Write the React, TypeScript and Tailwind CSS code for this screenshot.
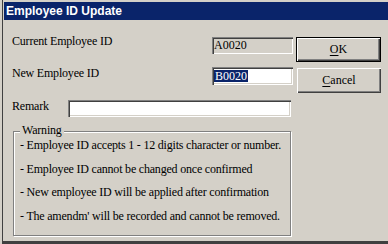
import React from "react";

const sunken =
  "shadow-[inset_1px_1px_0_#808080,inset_2px_2px_0_#404040,inset_-1px_-1px_0_#ffffff,inset_-2px_-2px_0_#d4d0c8]";
const raised =
  "shadow-[inset_1px_1px_0_#ffffff,inset_-1px_-1px_0_#404040,inset_-2px_-2px_0_#808080]";

const warnings = [
  "- Employee ID accepts 1 - 12 digits character or number.",
  "- Employee ID cannot be changed once confirmed",
  "- New employee ID will be applied after confirmation",
  "- The amendm' will be recorded and cannot be removed.",
];

const App: React.FC = () => {
  return (
    <div className="flex h-[244px] w-[388px] bg-[#d4d0c8] font-[family-name:Liberation_Serif,serif] text-[12px] leading-[15px] text-black">
      {/* window frame left edge */}
      <div className="ml-[2px] w-px bg-[#404040]" />
      <div className="flex flex-1 flex-col border-b-[3px] border-[#404040]">
        <div className="ml-px mt-[2px] flex h-[18px] items-center bg-[#0a246a] pl-[2px] font-[family-name:Liberation_Sans,sans-serif] text-[12px] font-bold text-white">
          Employee ID Update
        </div>

        <div className="flex pl-[9px] pt-[17px]">
          {/* left column */}
          <div className="flex w-[281px] flex-col tracking-[-0.2px]">
            <div className="flex items-start">
              <span className="-mt-[3.5px] w-[200px]">Current Employee ID</span>
              <div className={`flex h-[17px] w-[81px] items-center pl-[2px] tracking-normal ${sunken}`}>A0020</div>
            </div>

            <div className="mt-[13px] flex items-start">
              <span className="-mt-[1.5px] w-[200px]">New Employee ID</span>
              <div className={`flex h-[18px] w-[81px] items-center bg-white pl-[2px] tracking-normal ${sunken}`}>
                <span className="flex h-[12px] items-center bg-[#0a246a] px-px text-white">B0020</span>
              </div>
            </div>

            <div className="mt-[15px] flex items-start">
              <span className="-mt-[1.5px] w-[56px]">Remark</span>
              <div className={`h-[17px] w-[223px] bg-white ${sunken}`} />
            </div>

            <div className="relative ml-px mt-[14px] flex h-[105px] w-[278px] flex-col gap-[8.5px] border border-[#808080] pl-[6px] pt-[6px] shadow-[inset_1px_1px_0_#ffffff,1px_1px_0_#ffffff]">
              <span className="absolute -top-[9px] left-[6px] bg-[#d4d0c8] px-[2px]">Warning</span>
              {warnings.map((w) => (
                <p key={w} className="whitespace-nowrap">
                  {w}
                </p>
              ))}
            </div>
          </div>

          {/* buttons */}
          <div className="ml-[3px] flex flex-col">
            <button className="h-[25px] w-[85px] border border-black bg-[#d4d0c8]">
              <div className={`flex h-full w-full items-center justify-center ${raised}`}>
                <span className="underline decoration-1 underline-offset-2">O</span>K
              </div>
            </button>
            <button className={`mt-[6px] ml-px flex h-[25px] w-[84px] items-center justify-center bg-[#d4d0c8] ${raised}`}>
              <span className="underline decoration-1 underline-offset-2">C</span>ancel
            </button>
          </div>
        </div>
      </div>
    </div>
  );
};

export default App;
